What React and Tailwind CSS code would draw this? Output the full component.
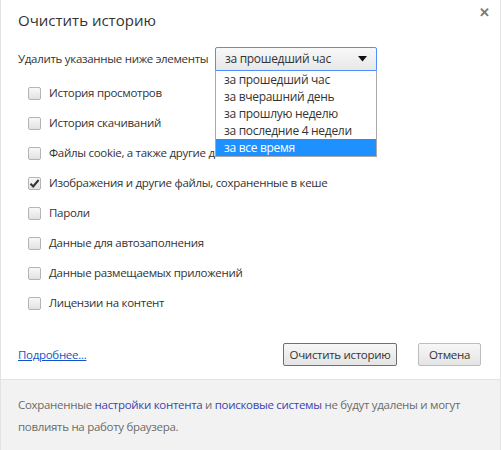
import React from "react";

function Checkbox({ checked }) {
  return (
    <span className="w-[13px] h-[13px] rounded-[2px] border border-[#b4b4b4] bg-gradient-to-b from-[#f8f8f8] to-[#e2e2e2] flex items-center justify-center shrink-0">
      {checked && (
        <svg width="11" height="11" viewBox="0 0 11 11">
          <path d="M1.5 5.8 L4.2 8.5 L9.6 2" fill="none" stroke="#333" strokeWidth="2" />
        </svg>
      )}
    </span>
  );
}

const items = [
  ["История просмотров", false],
  ["История скачиваний", false],
  ["Файлы cookie, а также другие данные", false],
  ["Изображения и другие файлы, сохраненные в кеше", true],
  ["Пароли", false],
  ["Данные для автозаполнения", false],
  ["Данные размещаемых приложений", false],
  ["Лицензии на контент", false],
];

const options = [
  "за прошедший час",
  "за вчерашний день",
  "за прошлую неделю",
  "за последние 4 недели",
  "за все время",
];

export default function App() {
  return (
    <div
      className="w-[501px] h-[450px] bg-white relative flex flex-col border-l border-r border-[#e3e3e3] text-[#333] overflow-hidden tracking-[-0.3px]"
      style={{ fontFamily: '"Open Sans", "Noto Sans", sans-serif' }}
    >
      <div className="absolute right-[10px] top-[6px] text-[#7a7a7a] text-[13px] font-bold leading-none">✕</div>
      <div className="flex-1 flex flex-col pl-[17px] pr-[18px] pt-[9px]">
        <div className="text-[15px] leading-[22px] text-[#333] tracking-normal">Очистить историю</div>
        <div className="flex items-center mt-[16px] h-[24px] text-[11.5px]">
          <span className="w-[197px] whitespace-nowrap">Удалить указанные ниже элементы</span>
          <div className="relative w-[162px] h-[24px] text-[12px]">
            <div className="h-full border border-[#4d90fe] rounded-t-[2px] bg-gradient-to-b from-[#f8f8f8] to-[#e8e8e8] flex items-center pl-[9px] pr-[9px] justify-between">
              <span>за прошедший час</span>
              <svg width="9" height="6" viewBox="0 0 9 6">
                <path d="M0 0 H9 L4.5 5.5 Z" fill="#111" />
              </svg>
            </div>
            <div className="absolute left-0 top-[24px] w-[162px] bg-white border border-[#a9a9a9] border-t-0 z-10 flex flex-col">
              {options.map((o, i) => (
                <div
                  key={o}
                  className={
                    "h-[17px] leading-[17px] pl-[8px] text-[12px] " +
                    (i === 4 ? "bg-[#1e90ff] text-white" : "text-[#333]")
                  }
                >
                  {o}
                </div>
              ))}
            </div>
          </div>
        </div>
        <div className="flex flex-col mt-[7px] pl-[10px] text-[11.5px]">
          {items.map(([t, c]) => (
            <div key={t} className="h-[30px] flex items-center gap-[8px] whitespace-nowrap">
              <Checkbox checked={c} />
              <span>{t}</span>
            </div>
          ))}
        </div>
        <div className="flex items-center mt-[25px] h-[23px] text-[11.5px]">
          <a className="text-[#1155cc] underline">Подробнее...</a>
          <div className="ml-auto flex gap-[21px] pr-[1px]">
            <button className="w-[114px] h-[23px] border border-[#6f6f6f] rounded-[2px] bg-gradient-to-b from-[#f7f7f7] to-[#e4e4e4] text-[#333]">
              Очистить историю
            </button>
            <button className="w-[63px] h-[23px] border border-[#bdbdbd] rounded-[2px] bg-gradient-to-b from-[#f7f7f7] to-[#e4e4e4] text-[#333]">
              Отмена
            </button>
          </div>
        </div>
      </div>
      <div className="h-[71px] bg-[#f2f2f2] border-t border-[#e3e3e3] pl-[17px] pr-[18px] pt-[14px] text-[11.5px] leading-[22px] text-[#6b6b6b]">
        Сохраненные <span className="text-[#3a44b0]">настройки контента</span> и{" "}
        <span className="text-[#3a44b0]">поисковые системы</span> не будут удалены и могут повлиять на работу браузера.
      </div>
    </div>
  );
}
